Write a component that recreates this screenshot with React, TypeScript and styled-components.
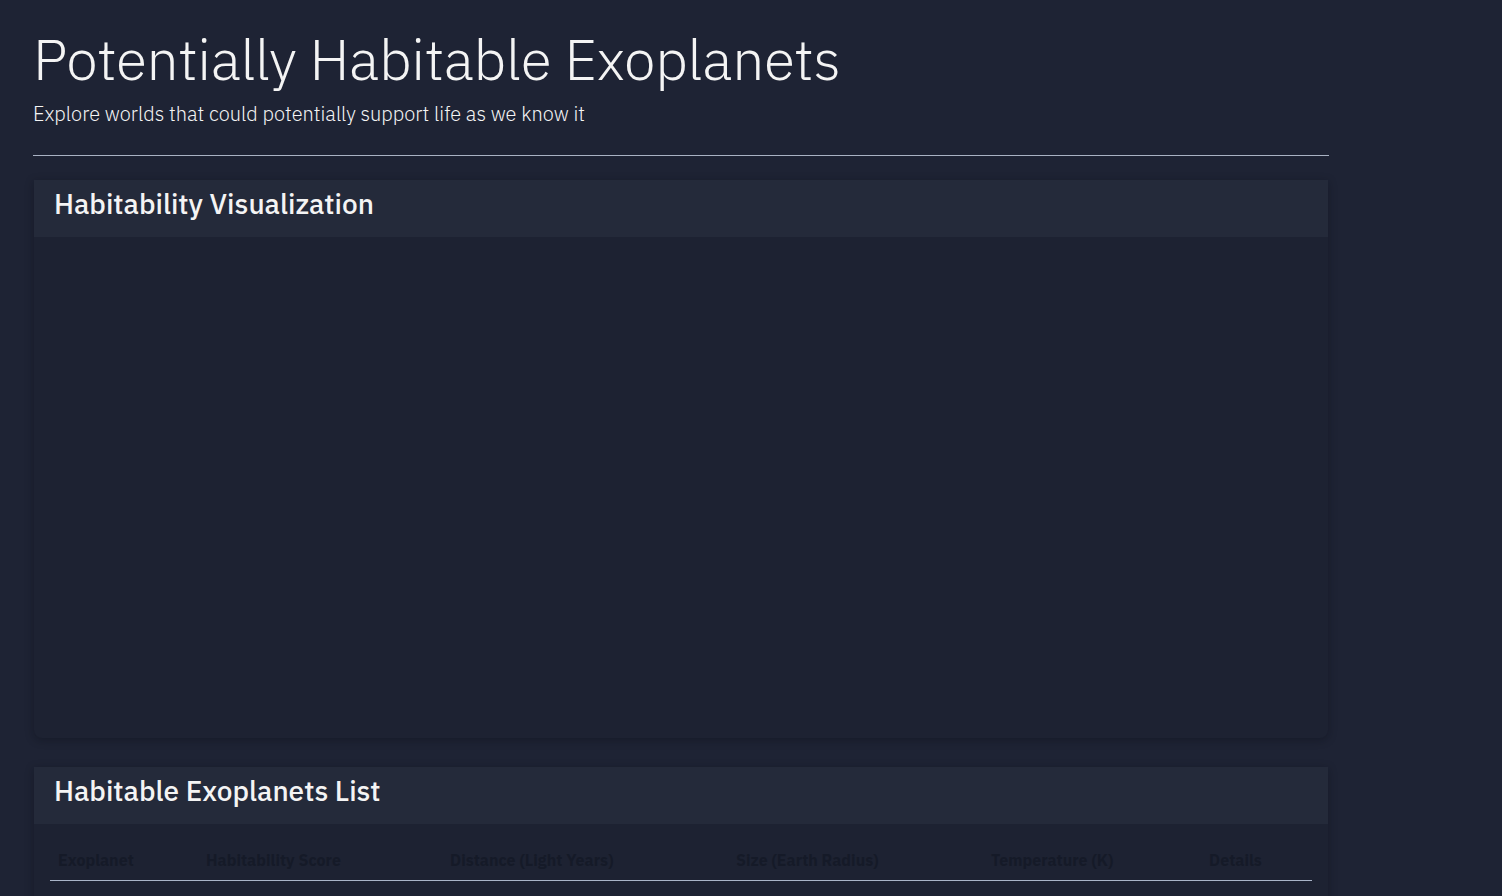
import React from "react";
import styled, { createGlobalStyle } from "styled-components";

const GlobalStyle = createGlobalStyle`
  html, body {
    margin: 0;
    padding: 0;
    background: #1e2334;
  }
  body {
    font-family: "IBM Plex Sans", "Open Sans", "Noto Sans", sans-serif;
    color: #f4f4f4;
  }
  * { box-sizing: border-box; }
`;

const Page = styled.div`
  width: 1362px;
  padding: 24px 33px 40px 33px;
`;

const Header = styled.header`
  display: flex;
  flex-direction: column;
  padding-bottom: 28px;
  border-bottom: 1px solid #a9b2c3;
  margin-bottom: 24px;
`;

const Title = styled.h1`
  margin: 0;
  font-size: 57px;
  font-weight: 300;
  line-height: 70px;
  letter-spacing: -0.3px;
  color: #f4f4f4;
`;

const Subtitle = styled.p`
  margin: 7px 0 0 0;
  font-size: 20px;
  font-weight: 300;
  line-height: 26px;
  color: #f4f4f4;
`;

const Card = styled.section`
  margin: 0 1px 29px 1px;
  background: #1d2232;
  border-radius: 0 0 8px 8px;
  box-shadow: 0 2px 8px rgba(10, 12, 20, 0.35);
`;

const CardHeader = styled.div`
  height: 57px;
  display: flex;
  align-items: center;
  padding: 0 20px 10px 20px;
  background: #242a3a;
`;

const CardTitle = styled.h2`
  margin: 0;
  font-size: 28px;
  font-weight: 500;
  color: #f4f4f4;
`;

const ChartArea = styled.div`
  height: 501px;
`;

const TableWrap = styled.div`
  padding: 16px 16px 40px 16px;
`;

const Table = styled.table`
  width: 1262px;
  border-collapse: collapse;
  table-layout: fixed;
`;

const Th = styled.th`
  height: 40px;
  padding: 0 8px;
  text-align: left;
  font-size: 16px;
  font-weight: 700;
  color: #151a28;
  border-bottom: 1px solid #a9b4c8;
`;

const columns: { label: string; width: number }[] = [
  { label: "Exoplanet", width: 148 },
  { label: "Habitability Score", width: 244 },
  { label: "Distance (Light Years)", width: 286 },
  { label: "Size (Earth Radius)", width: 255 },
  { label: "Temperature (K)", width: 218 },
  { label: "Details", width: 111 },
];

export default function App() {
  return (
    <>
      <GlobalStyle />
      <Page>
        <Header>
          <Title>Potentially Habitable Exoplanets</Title>
          <Subtitle>Explore worlds that could potentially support life as we know it</Subtitle>
        </Header>
        <Card>
          <CardHeader>
            <CardTitle>Habitability Visualization</CardTitle>
          </CardHeader>
          <ChartArea />
        </Card>
        <Card>
          <CardHeader>
            <CardTitle>Habitable Exoplanets List</CardTitle>
          </CardHeader>
          <TableWrap>
            <Table>
              <colgroup>
                {columns.map((c) => (
                  <col key={c.label} style={{ width: c.width }} />
                ))}
              </colgroup>
              <thead>
                <tr>
                  {columns.map((c) => (
                    <Th key={c.label}>{c.label}</Th>
                  ))}
                </tr>
              </thead>
              <tbody />
            </Table>
          </TableWrap>
        </Card>
      </Page>
    </>
  );
}
